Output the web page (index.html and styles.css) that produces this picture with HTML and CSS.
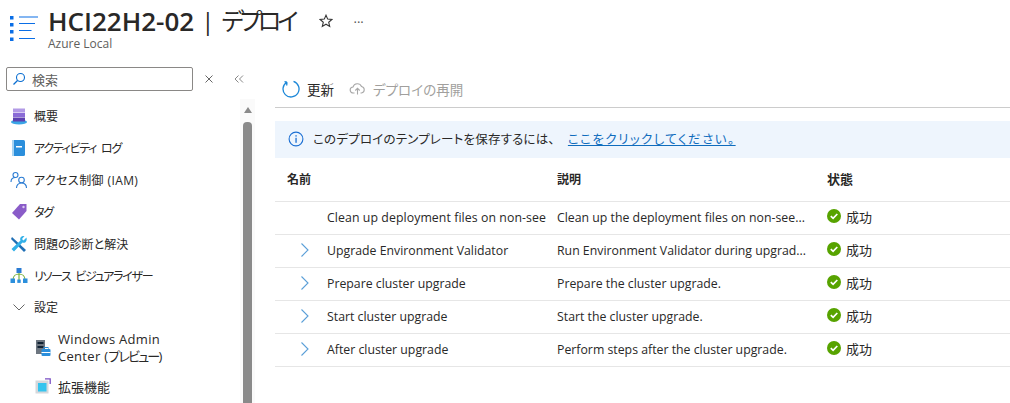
FILE: index.html
```html
<!DOCTYPE html>
<html lang="ja">
<head>
<meta charset="utf-8">
<title>HCI22H2-02 | デプロイ</title>
<link rel="stylesheet" href="styles.css">
</head>
<body>
<div class="page">
  <header class="header">
    <svg class="header-icon" width="30" height="30" viewBox="0 0 30 30">
      <g fill="#0a6ee6">
        <rect x="0" y="1" width="3.500" height="3.500"/><rect x="0" y="8" width="3.500" height="3.500"/><rect x="0" y="15" width="3.500" height="3.500"/><rect x="0" y="22.500" width="3.500" height="3.500"/>
      </g>
      <g stroke="#0a6ee6" stroke-width="1.200" fill="none">
        <path d="M9 2h19M9 8.500h16M9 15.500h12.500M9 23.500h16"/>
      </g>
    </svg>
    <div class="title-block">
      <div class="title-row">
        <h1 class="title"><b class="title-name">HCI22H2-02</b><span class="title-sep">|</span><span class="title-page">デプロイ</span></h1>
        <svg class="star" width="14" height="14" viewBox="0 0 14 14"><path d="M7 1.200l1.700 3.900 4.200.4-3.200 2.800 1 4.100L7 10.200l-3.700 2.200 1-4.100L1.100 5.500l4.200-.4z" fill="none" stroke="#333" stroke-width="1.100"/></svg>
        <span class="more">···</span>
      </div>
      <div class="subtitle">Azure Local</div>
    </div>
  </header>
  <div class="body">
    <aside class="sidebar">
      <div class="nav-col">
        <div class="search-row">
          <div class="search">
            <svg width="14" height="14" viewBox="0 0 14 14"><circle cx="8.500" cy="5.500" r="4" fill="none" stroke="#0a6ed1" stroke-width="1.100"/><path d="M5.500 8.500L1.500 12.500" stroke="#0a6ed1" stroke-width="1.300"/></svg>
            <span>検索</span>
          </div>
          <svg class="search-x" width="8" height="8" viewBox="0 0 8 8"><path d="M.5.5l7 7M7.500.5l-7 7" stroke="#666" fill="none"/></svg>
          <svg class="collapse" width="10" height="8" viewBox="0 0 10 8"><path d="M4.500.5L1 4l3.500 3.500M9 .5L5.500 4 9 7.500" stroke="#888" fill="none"/></svg>
        </div>
        <nav class="nav">
          <a class="nav-item">
            <svg class="nav-icon" width="18" height="18" viewBox="0 0 18 18"><ellipse cx="9" cy="15" rx="8" ry="2.500" fill="#3aa5e6"/><rect x="3" y="1.500" width="12" height="4" fill="#b29ae6"/><rect x="3" y="6" width="12" height="4" fill="#8a6bd6"/><rect x="3" y="10.500" width="12" height="4" fill="#5c3fb0"/></svg>
            <span>概要</span>
          </a>
          <a class="nav-item">
            <svg class="nav-icon" width="18" height="18" viewBox="0 0 18 18"><rect x="2" y="1" width="13" height="16" rx="1.500" fill="#2b8fdc"/><rect x="2" y="1" width="2" height="16" fill="#a8d4f2"/><rect x="6" y="7" width="6" height="1.500" fill="#fff"/></svg>
            <span class="kana">アクティビティ ログ</span>
          </a>
          <a class="nav-item">
            <svg class="nav-icon" width="18" height="18" viewBox="0 0 18 18"><g fill="none" stroke="#2b7cd3" stroke-width="1.100"><circle cx="5.500" cy="4" r="2.500"/><path d="M1 11c0-3 2-4.500 4.500-4.500"/><circle cx="11.500" cy="9" r="2.800"/><path d="M6.500 17c0-3 2-5 5-5s5 2 5 5"/></g></svg>
            <span class="wide">アクセス制御 (IAM)</span>
          </a>
          <a class="nav-item">
            <svg class="nav-icon" width="18" height="18" viewBox="0 0 18 18"><path d="M10 1h6.500v7L9 16.500 2 10z" fill="#8a5cc8"/><circle cx="13.500" cy="4" r="1.200" fill="#d9c8f0"/></svg>
            <span class="kana">タグ</span>
          </a>
          <a class="nav-item">
            <svg class="nav-icon" width="18" height="18" viewBox="0 0 18 18"><path d="M2 2l14 13-2 2L1 4z" fill="#1f6fb5"/><path d="M16.500 2.500l-3 3-1.500-1.500 2.500-3C11 .5 9.500 3 10.500 5.500L1.500 14l2.500 2.500 8.500-9c2.500 1 5-1 4-5z" fill="#32b0e8"/></svg>
            <span>問題の診断と解決</span>
          </a>
          <a class="nav-item">
            <svg class="nav-icon" width="18" height="18" viewBox="0 0 18 18"><path d="M3 13C3 9 6 7 9 7s6 2 6 6M9 5v8" stroke="#7cb342" stroke-width="1.200" fill="none"/><rect x="6.500" y="1" width="5" height="5" fill="#2b7cd3"/><rect x="0.500" y="11.500" width="4.500" height="4.500" fill="#2b8fdc"/><rect x="7.300" y="12.500" width="3.400" height="3.400" fill="#2b8fdc"/><rect x="13" y="11.500" width="4.500" height="4.500" fill="#2b8fdc"/></svg>
            <span class="kana">リソース ビジュアライザー</span>
          </a>
          <a class="nav-item nav-group">
            <svg class="nav-icon" width="18" height="18" viewBox="0 0 18 18"><path d="M3.500 6.500L9 12l5.500-5.500" stroke="#666" fill="none"/></svg>
            <span>設定</span>
          </a>
          <a class="nav-item nav-sub nav-tall">
            <svg class="nav-icon" width="16" height="18" viewBox="0 0 16 18"><rect x="1" y="1" width="9" height="14" fill="#6d7680"/><rect x="2.500" y="3" width="6" height="2" fill="#123"/><rect x="2.500" y="7" width="6" height="2" fill="#123"/><rect x="6.500" y="10" width="9" height="7" rx="1" fill="#2b8fdc"/><rect x="9" y="8.500" width="4" height="2" fill="none" stroke="#2b8fdc"/><rect x="6.500" y="13" width="9" height="1" fill="#fff"/></svg>
            <span>Windows Admin<br>Center (<span class="kana-tight">プレビュー</span>)</span>
          </a>
          <a class="nav-item nav-sub">
            <svg class="nav-icon" width="16" height="16" viewBox="0 0 16 16"><path d="M10 .8h5.200V6" stroke="#7a4fc4" stroke-width="1.300" fill="none"/><rect x="0.500" y="2.500" width="13" height="13" fill="#d5d8dc"/><rect x="3" y="5" width="8.500" height="8.500" fill="#35c4ee"/></svg>
            <span class="plain">拡張機能</span>
          </a>
        </nav>
      </div>
      <div class="scrollbar">
        <div class="scroll-arrow"></div>
        <div class="scroll-thumb"></div>
      </div>
    </aside>
    <main class="main">
      <div class="toolbar">
        <button class="tool">
          <svg width="18" height="18" viewBox="0 0 18 18"><path d="M11.500 1.400A8 8 0 1 1 5 2.100M5 2.100L4.700 5.500M5 2.100L2.500 1.700" fill="none" stroke="#1b87d8" stroke-width="1.300"/></svg>
          <span>更新</span>
        </button>
        <button class="tool tool-disabled">
          <svg width="17" height="12" viewBox="0 0 16 12"><path d="M5 10H3.800a3 3 0 0 1-.3-6A4.500 4.500 0 0 1 12 3.500 3.300 3.300 0 0 1 12 10h-1" fill="none" stroke="#a8a8a8" stroke-width="1.100"/><path d="M8 11.500V5.500M5.800 7.500L8 5.300l2.200 2.200" fill="none" stroke="#a8a8a8" stroke-width="1.100"/></svg>
          <span>デプロイの再開</span>
        </button>
      </div>
      <div class="banner">
        <svg width="16" height="16" viewBox="0 0 16 16"><circle cx="8" cy="8" r="6.900" fill="none" stroke="#1b6fd3" stroke-width="1.100"/><rect x="7.400" y="6.800" width="1.300" height="5" fill="#1b6fd3"/><rect x="7.400" y="4.200" width="1.300" height="1.400" fill="#1b6fd3"/></svg>
        <span class="banner-text">このデプロイのテンプレートを保存するには、</span>
        <a class="banner-link">ここをクリックしてください。</a>
      </div>
      <div class="table">
        <div class="row row-head">
          <div class="cell-name">名前</div>
          <div class="cell-desc">説明</div>
          <div class="cell-status">状態</div>
        </div>
        <div class="row">
          <div class="cell-expander"></div>
          <div class="cell-text cell-clip">Clean up deployment files on non-see</div>
          <div class="cell-desc">Clean up the deployment files on non-see...</div>
          <div class="cell-status"><svg class="ok" width="14" height="14" viewBox="0 0 14 14"><circle cx="7" cy="7" r="7" fill="#57a300"/><path d="M3.800 7.200l2.300 2.200 4.200-4.400" fill="none" stroke="#fff" stroke-width="1.700"/></svg><span>成功</span></div>
        </div>
        <div class="row">
          <div class="cell-expander"><svg width="10" height="14" viewBox="0 0 10 14"><path d="M1.500 .5L8 7l-6.500 6.500" fill="none" stroke="#5b9fd8" stroke-width="1.100"/></svg></div>
          <div class="cell-text">Upgrade Environment Validator</div>
          <div class="cell-desc">Run Environment Validator during upgrad...</div>
          <div class="cell-status"><svg class="ok" width="14" height="14" viewBox="0 0 14 14"><circle cx="7" cy="7" r="7" fill="#57a300"/><path d="M3.800 7.200l2.300 2.200 4.200-4.400" fill="none" stroke="#fff" stroke-width="1.700"/></svg><span>成功</span></div>
        </div>
        <div class="row">
          <div class="cell-expander"><svg width="10" height="14" viewBox="0 0 10 14"><path d="M1.500 .5L8 7l-6.500 6.500" fill="none" stroke="#5b9fd8" stroke-width="1.100"/></svg></div>
          <div class="cell-text">Prepare cluster upgrade</div>
          <div class="cell-desc">Prepare the cluster upgrade.</div>
          <div class="cell-status"><svg class="ok" width="14" height="14" viewBox="0 0 14 14"><circle cx="7" cy="7" r="7" fill="#57a300"/><path d="M3.800 7.200l2.300 2.200 4.200-4.400" fill="none" stroke="#fff" stroke-width="1.700"/></svg><span>成功</span></div>
        </div>
        <div class="row">
          <div class="cell-expander"><svg width="10" height="14" viewBox="0 0 10 14"><path d="M1.500 .5L8 7l-6.500 6.500" fill="none" stroke="#5b9fd8" stroke-width="1.100"/></svg></div>
          <div class="cell-text">Start cluster upgrade</div>
          <div class="cell-desc">Start the cluster upgrade.</div>
          <div class="cell-status"><svg class="ok" width="14" height="14" viewBox="0 0 14 14"><circle cx="7" cy="7" r="7" fill="#57a300"/><path d="M3.800 7.200l2.300 2.200 4.200-4.400" fill="none" stroke="#fff" stroke-width="1.700"/></svg><span>成功</span></div>
        </div>
        <div class="row">
          <div class="cell-expander"><svg width="10" height="14" viewBox="0 0 10 14"><path d="M1.500 .5L8 7l-6.500 6.500" fill="none" stroke="#5b9fd8" stroke-width="1.100"/></svg></div>
          <div class="cell-text">After cluster upgrade</div>
          <div class="cell-desc">Perform steps after the cluster upgrade.</div>
          <div class="cell-status"><svg class="ok" width="14" height="14" viewBox="0 0 14 14"><circle cx="7" cy="7" r="7" fill="#57a300"/><path d="M3.800 7.200l2.300 2.200 4.200-4.400" fill="none" stroke="#fff" stroke-width="1.700"/></svg><span>成功</span></div>
        </div>
      </div>
    </main>
  </div>
</div>
</body>
</html>
```
FILE: styles.css
```css
* { box-sizing: border-box; }
html, body { margin: 0; padding: 0; height: 100%; overflow: hidden; background: #fff; }
body { font-family: "Open Sans", "Noto Sans CJK JP", sans-serif; font-size: 12px; color: #292827; font-feature-settings: "palt"; }
.page { width: 1010px; height: 403px; display: flex; flex-direction: column; overflow: hidden; }
.header { height: 68px; flex: none; display: flex; align-items: flex-start; padding: 15px 0 0 10px; }
.header-icon { flex: none; margin-right: 8px; }
.title-block { margin-top: -10px; }
.title-row { display: flex; align-items: center; height: 32px; }
.title { margin: 0; font-size: 26px; font-weight: 400; line-height: 32px; white-space: nowrap; display: flex; align-items: center; }
.title-name { font-weight: 600; }
.title-sep { margin: 0 7px; font-size: 24px; }
.title-page { font-size: 24px; letter-spacing: -4px; }
.star { margin-left: 25px; }
.more { margin-left: 20px; margin-top: 2px; font-size: 13px; color: #555; }
.subtitle { font-size: 12px; line-height: 14px; color: #605e5c; }
.body { flex: 1; display: flex; min-height: 0; margin-top: -1px; }
.sidebar { width: 255px; flex: none; display: flex; overflow: hidden; }
.nav-col { width: 240px; flex: none; }
.search-row { display: flex; align-items: center; padding-left: 6px; height: 24px; }
.search { width: 187px; flex: none; height: 24px; border: 1px solid #8a8886; border-radius: 2px; display: flex; align-items: center; gap: 6px; padding-left: 5px; font-size: 13px; color: #605e5c; }
.search-x { flex: none; margin-left: 12px; }
.collapse { flex: none; margin-left: 21px; }
.nav { display: flex; flex-direction: column; padding-top: 9px; }
.nav-item { height: 32px; display: flex; align-items: center; padding-left: 10px; gap: 6px; font-size: 12px; white-space: nowrap; }
.nav-group { height: 30px; }
.nav-icon { flex: none; }
.kana { letter-spacing: -1.3px; word-spacing: 3px; }
.wide { letter-spacing: 0.4px; }
.nav-sub { padding-left: 35px; gap: 7px; font-size: 13px; letter-spacing: 0.3px; }
.plain { letter-spacing: 0; }
.nav-tall { height: 48px; line-height: 17px; padding-top: 3px; }
.kana-tight { letter-spacing: -1.8px; }
.scrollbar { width: 15px; flex: none; margin-top: 32px; display: flex; flex-direction: column; align-items: center; padding-top: 8px; background: #fafafa; }
.scroll-arrow { width: 0; height: 0; border-left: 4.5px solid transparent; border-right: 4.5px solid transparent; border-bottom: 6px solid #8a8a8a; }
.scroll-thumb { flex: 1; width: 9px; margin-top: 9px; background: #8a8a8a; border-radius: 4px 4px 0 0; }
.main { flex: 1; min-width: 0; margin-left: 20px; display: flex; flex-direction: column; }
.toolbar { height: 41px; flex: none; display: flex; align-items: center; gap: 15px; border-bottom: 1px solid #ccc; padding: 4px 0 0 7px; }
.tool { display: flex; align-items: center; gap: 7px; padding: 0; border: 0; background: none; font: inherit; font-size: 13.5px; color: #292827; font-feature-settings: inherit; }
.tool-disabled { color: #a19f9d; }
.banner { margin-top: 13px; height: 37px; flex: none; background: #eef5fd; display: flex; align-items: center; padding: 0 0 2px 13px; font-size: 12.5px; }
.banner-text { margin-left: 9px; letter-spacing: 0.2px; }
.banner-link { margin-left: 13px; color: #0f6cbd; text-decoration: underline; letter-spacing: 1.45px; }
.table { display: flex; flex-direction: column; }
.row { display: flex; height: 33px; padding-bottom: 2px; align-items: center; border-bottom: 1px solid #e6e6e6; font-size: 12.3px; white-space: nowrap; }
.row-head { height: 44px; padding-bottom: 2px; font-weight: 700; font-size: 12px; }
.cell-name { width: 282px; padding-left: 12px; }
.cell-expander { width: 52px; padding-left: 25px; display: flex; align-items: center; }
.cell-text { width: 230px; }
.cell-clip { letter-spacing: 0.08px; }
.cell-desc { width: 270px; }
.cell-status { display: flex; align-items: center; gap: 5px; font-size: 13px; }
.ok { margin-top: -3px; }
.ok + span { margin-top: -2px; }
```
